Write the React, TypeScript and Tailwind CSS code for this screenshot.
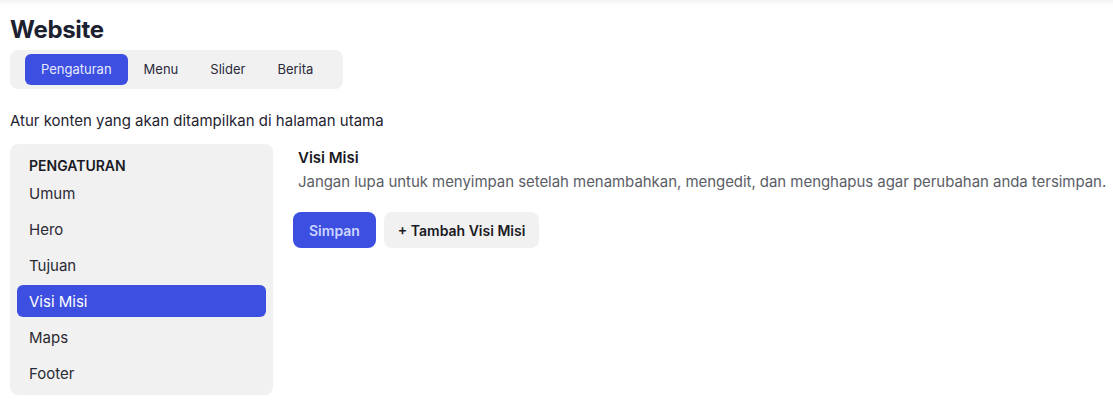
import { useState } from 'react';

const TABS = ['Pengaturan', 'Menu', 'Slider', 'Berita'];
const SECTIONS = ['Umum', 'Hero', 'Tujuan', 'Visi Misi', 'Maps', 'Footer'];

export default function App() {
  const [tab, setTab] = useState('Pengaturan');
  const [section, setSection] = useState('Visi Misi');

  return (
    <div className="min-h-screen bg-white text-[#1f2430] font-['Inter',sans-serif]">
      <div className="h-[6px] bg-gradient-to-b from-[#f4f4f4] to-white" />
      <div className="px-[10px]">
        <h1 className="text-[24px] font-bold leading-[30px] mt-[9px] tracking-[-0.3px] text-[#1c2130]">Website</h1>

        <div className="mt-[5px] flex items-center rounded-lg bg-[#f1f1f1] px-[15px] py-1 w-[333px]">
          {TABS.map((t) => (
            <button
              key={t}
              onClick={() => setTab(t)}
              className={
                t === tab
                  ? 'h-[31px] rounded-md bg-[#3c4fe0] px-4 text-[13px] text-[#e6e9ff]'
                  : 'h-[31px] rounded-md px-4 text-[13px] text-[#2a2a3a]'
              }
            >
              {t}
            </button>
          ))}
        </div>

        <p className="mt-[21px] text-[15px] leading-[22px]">Atur konten yang akan ditampilkan di halaman utama</p>

        <div className="mt-[12px] flex gap-[20px]">
          <aside className="w-[263px] shrink-0 rounded-lg bg-[#f1f1f1] px-[7px] pt-[11px] pb-[6px]">
            <div className="px-3 text-[14px] font-semibold leading-[22px] text-[#1a1a24]">PENGATURAN</div>
            <ul className="flex flex-col gap-1">
              {SECTIONS.map((s) => (
                <li key={s}>
                  <button
                    onClick={() => setSection(s)}
                    className={
                      s === section
                        ? 'flex h-[32px] w-full items-center rounded-md bg-[#3c4fe0] px-3 pt-[2px] text-[15px] text-white'
                        : 'flex h-[32px] w-full items-center rounded-md px-3 pt-[2px] text-[15px] text-[#2a2a33]'
                    }
                  >
                    {s}
                  </button>
                </li>
              ))}
            </ul>
          </aside>

          <section className="min-w-0 flex-1 pt-[4px]">
            <h2 className="ml-[5px] text-[15px] font-semibold leading-[20px] text-[#1a1a24]">Visi Misi</h2>
            <p className="ml-[5px] mt-[4px] whitespace-nowrap text-[15px] leading-[20px] tracking-[-0.05px] text-[#5b5e66]">
              Jangan lupa untuk menyimpan setelah menambahkan, mengedit, dan menghapus agar perubahan anda tersimpan.
            </p>
            <div className="mt-[20px] flex gap-2">
              <button className="h-[36px] rounded-lg bg-[#3c4fe0] px-4 text-[14px] font-semibold text-[#cdd5ff]">
                Simpan
              </button>
              <button className="h-[36px] rounded-lg bg-[#f1f1f1] px-[14px] text-[14px] font-semibold text-[#1a1a24]">
                + Tambah Visi Misi
              </button>
            </div>
          </section>
        </div>
      </div>
    </div>
  );
}
